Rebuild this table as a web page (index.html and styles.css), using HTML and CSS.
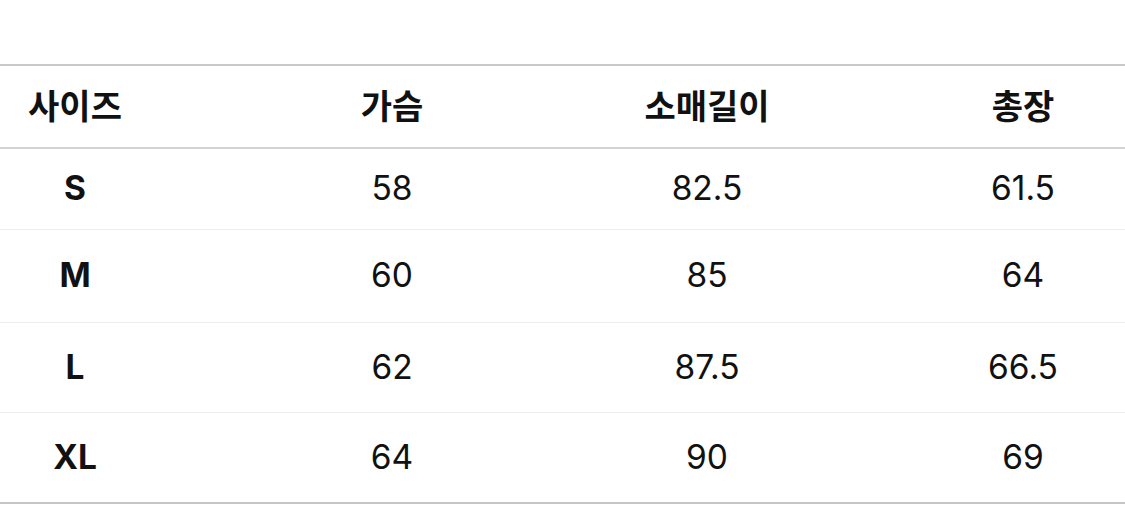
FILE: index.html
```html
<!DOCTYPE html>
<html lang="ko">
<head>
<meta charset="utf-8">
<link rel="stylesheet" href="styles.css">
</head>
<body>
<div class="wrap">
  <div class="table">
    <div class="row head">
      <div class="cell">사이즈</div>
      <div class="cell">가슴</div>
      <div class="cell">소매길이</div>
      <div class="cell">총장</div>
    </div>
    <div class="row r1">
      <div class="cell size">S</div>
      <div class="cell">58</div>
      <div class="cell">82.5</div>
      <div class="cell">61.5</div>
    </div>
    <div class="row r2">
      <div class="cell size">M</div>
      <div class="cell">60</div>
      <div class="cell">85</div>
      <div class="cell">64</div>
    </div>
    <div class="row r3">
      <div class="cell size">L</div>
      <div class="cell">62</div>
      <div class="cell">87.5</div>
      <div class="cell">66.5</div>
    </div>
    <div class="row r4">
      <div class="cell size">XL</div>
      <div class="cell">64</div>
      <div class="cell">90</div>
      <div class="cell">69</div>
    </div>
  </div>
</div>
</body>
</html>
```
FILE: styles.css
```css
html, body {
  margin: 0;
  padding: 0;
  background: #ffffff;
}
body {
  width: 1125px;
  height: 507px;
  overflow: hidden;
  font-family: Inter, "Noto Sans CJK KR", sans-serif;
  color: #111111;
}
.wrap {
  padding-top: 64px;
  overflow: hidden;
}
.table {
  width: 1266px;
  border-top: 2px solid #c9c9c9;
  border-bottom: 2px solid #c6c6c6;
}
.row {
  display: grid;
  grid-template-columns: 150px 484px 146px 486px;
  align-items: center;
  border-bottom: 1px solid #ededed;
}
.row:last-child {
  border-bottom: none;
}
.cell {
  text-align: center;
  white-space: nowrap;
  font-size: 33.5px;
  font-weight: 400;
  letter-spacing: 0;
  padding-bottom: 2px;
}
.head {
  height: 81px;
  border-bottom: 2px solid #d3d3d3;
}
.head .cell {
  font-family: "Noto Sans CJK KR", sans-serif;
  font-size: 34px;
  font-weight: 700;
  letter-spacing: 0;
  padding-bottom: 4px;
}
.size {
  font-weight: 700;
}
.r1 { height: 80px; }
.r2 { height: 92px; }
.r3 { height: 89px; }
.r4 { height: 89px; }
```
